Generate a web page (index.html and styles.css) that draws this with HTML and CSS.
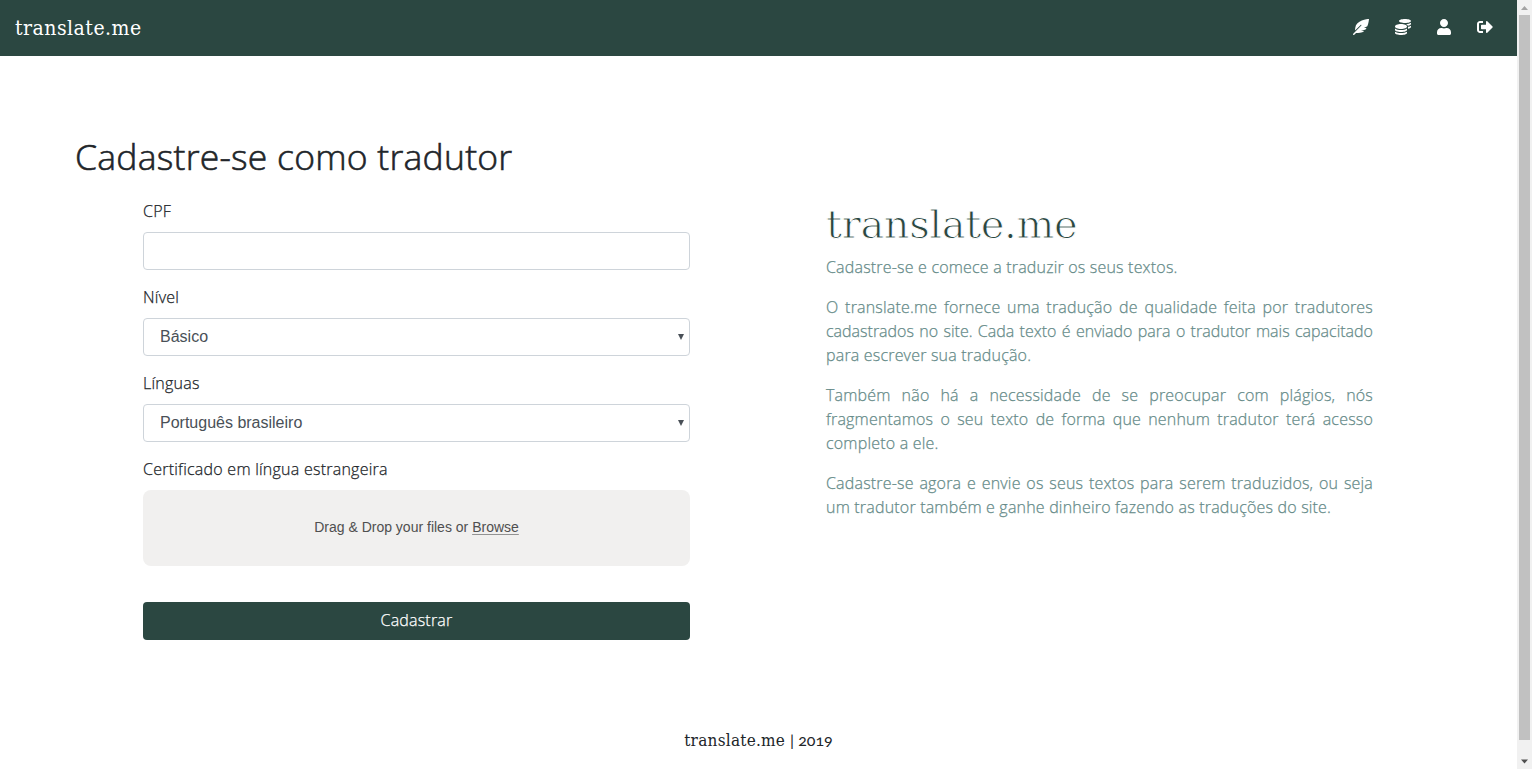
FILE: index.html
```
<!DOCTYPE html>
<html lang="pt-BR">
<head>
<meta charset="utf-8">
<title>translate.me</title>
<link rel="stylesheet" href="styles.css">
</head>
<body>
<div class="page">
  <nav class="navbar">
    <a class="brand">translate.me</a>
    <div class="nav-icons">
      <svg width="16" height="16" viewBox="0 0 512 512"><path d="M512 0C460.22 3.56 96.44 38.2 71.01 287.61c-3.09 26.66-4.84 53.44-5.99 80.24l178.87-178.69c6.25-6.25 16.4-6.25 22.65 0s6.25 16.38 0 22.63L7.04 471.03c-9.38 9.37-9.38 24.57 0 33.94 9.38 9.37 24.59 9.37 33.98 0l57.13-57.07c42.09-.14 84.15-2.53 125.96-7.36 53.48-5.44 97.02-26.47 132.58-56.54H255.74l146.79-48.88c11.25-14.89 21.37-30.71 30.45-47.12h-81.14l106.54-53.21C500.29 132.86 510.19 26.26 512 0z"/></svg>
      <svg width="16" height="16" viewBox="0 0 512 512"><path d="M0 405.3V448c0 35.3 86 64 192 64s192-28.700 192-64v-42.700C342.700 434.400 267.200 448 192 448S41.300 434.400 0 405.300zM320 128c106 0 192-28.700 192-64S426 0 320 0 128 28.700 128 64s86 64 192 64zM0 300.400V352c0 35.300 86 64 192 64s192-28.700 192-64v-51.600c-41.300 34-116.900 51.600-192 51.600S41.300 334.400 0 300.400zm416 11c57.300-11.100 96-31.700 96-55.400v-42.700c-23.200 16.400-57.300 27.600-96 34.500v63.600zM192 160C86 160 0 195.800 0 240s86 80 192 80 192-35.800 192-80-86-80-192-80zm219.300 56.300c60-10.800 100.700-32 100.700-56.300v-42.700c-35.500 25.100-96.500 38.600-160.700 41.800 29.500 14.300 51.200 33.500 60 57.200z"/></svg>
      <svg width="14" height="16" viewBox="0 0 448 512"><path d="M224 256c70.700 0 128-57.300 128-128S294.700 0 224 0 96 57.300 96 128s57.300 128 128 128zm89.600 32h-16.700c-22.200 10.200-46.900 16-72.900 16s-50.600-5.800-72.900-16h-16.700C60.200 288 0 348.200 0 422.400V464c0 26.500 21.500 48 48 48h352c26.500 0 48-21.500 48-48v-41.600c0-74.200-60.200-134.400-134.400-134.400z"/></svg>
      <svg width="16" height="16" viewBox="0 0 512 512"><path d="M497 273L329 441c-15 15-41 4.500-41-17v-96H152c-13.300 0-24-10.700-24-24v-96c0-13.300 10.700-24 24-24h136V88c0-21.400 25.900-32 41-17l168 168c9.300 9.400 9.300 24.600 0 34zM192 436v-40c0-6.600-5.400-12-12-12H96c-17.700 0-32-14.300-32-32V160c0-17.700 14.300-32 32-32h84c6.600 0 12-5.400 12-12V76c0-6.600-5.400-12-12-12H96c-53 0-96 43-96 96v192c0 53 43 96 96 96h84c6.600 0 12-5.400 12-12z"/></svg>
    </div>
  </nav>
  <main class="container">
    <h1 class="heading">Cadastre-se como tradutor</h1>
    <div class="row">
      <form class="form">
        <label class="label">CPF</label>
        <div class="control"></div>
        <label class="label">Nível</label>
        <div class="control">Básico<svg class="arrow" width="6" height="6"><path d="M0 0h6L3 6z"/></svg></div>
        <label class="label">Línguas</label>
        <div class="control">Português brasileiro<svg class="arrow" width="6" height="6"><path d="M0 0h6L3 6z"/></svg></div>
        <label class="label">Certificado em língua estrangeira</label>
        <div class="drop"><span>Drag &amp; Drop your files or <span class="browse">Browse</span></span></div>
        <button class="submit" type="button">Cadastrar</button>
      </form>
      <section class="about">
        <h2 class="title">translate.me</h2>
        <p>Cadastre-se e comece a traduzir os seus textos.</p>
        <p><span class="line">O translate.me fornece uma tradução de qualidade feita por tradutores</span> <span class="line tight">cadastrados no site. Cada texto é enviado para o tradutor mais capacitado</span> para escrever sua tradução.</p>
        <p><span class="line">Também não há a necessidade de se preocupar com plágios, nós</span> <span class="line">fragmentamos o seu texto de forma que nenhum tradutor terá acesso</span> completo a ele.</p>
        <p><span class="line">Cadastre-se agora e envie os seus textos para serem traduzidos, ou seja</span> um tradutor também e ganhe dinheiro fazendo as traduções do site.</p>
      </section>
    </div>
  </main>
  <footer class="footer"><span class="footer-brand">translate.me</span><span class="year">| 2019</span></footer>
</div>
<div class="scrollbar">
  <svg width="15" height="15"><path d="M4 10l3.500-4L11 10z" fill="#a3a3a3"/></svg>
  <div class="thumb"></div>
  <svg class="down" width="15" height="15"><path d="M4 5.500h7L7.500 9.500z" fill="#505050"/></svg>
</div>
</body>
</html>
```
FILE: styles.css
```
* { box-sizing: border-box; }
body {
  margin: 0;
  height: 769px;
  display: flex;
  overflow: hidden;
  background: #fff;
  color: #212529;
  font: 300 16px/24px "Open Sans", sans-serif;
  letter-spacing: .19px;
}
.page { flex: 1; }
.navbar {
  height: 56px;
  padding: 0 24px 0 15px;
  display: flex;
  align-items: center;
  justify-content: space-between;
  background: #2b4741;
  color: #fff;
}
.brand {
  font: 21px/30px "DejaVu Serif Condensed", "DejaVu Serif", serif;
  font-stretch: condensed;
  letter-spacing: .47px;
}
.nav-icons { display: flex; gap: 26px; padding-bottom: 2px; fill: #fff; }
.container { width: 1366px; margin: 0 0 0 75px; padding-top: 78px; }
.heading {
  margin: 0 0 22px;
  font-size: 35.500px;
  line-height: 44px;
  font-weight: 300;
  letter-spacing: .24px;
  -webkit-text-stroke: .6px;
}
.row { display: grid; grid-template-columns: 1fr 1fr; }
.form { padding: 0 68px; }
.about { padding: 0 68px; color: #668b89; }
.label { display: block; margin: -1px 0 9px; letter-spacing: .24px; -webkit-text-stroke: .25px; }
.control {
  height: 38px;
  margin-bottom: 16px;
  padding: 0 5px 0 16px;
  display: flex;
  align-items: center;
  justify-content: space-between;
  border: 1px solid #ced4da;
  border-radius: 4px;
  color: #495057;
  font: 16px/24px "Liberation Sans", Arial, sans-serif;
  letter-spacing: 0;
}
.arrow { fill: #495057; }
.drop {
  height: 76px;
  margin-bottom: 36px;
  display: flex;
  align-items: center;
  justify-content: center;
  padding-bottom: 2px;
  border-radius: 8px;
  background: #f1f0ef;
  color: #4f4f4f;
  font: 14px/20px "Liberation Sans", Arial, sans-serif;
  letter-spacing: 0;
}
.browse { text-decoration: underline 1px #929292; text-underline-offset: 2px; }
.submit {
  display: block;
  width: 100%;
  height: 38px;
  padding: 0 0 2px;
  border: 0;
  border-radius: 4px;
  background: #2b4741;
  color: #fff;
  font: inherit;
  letter-spacing: .19px;
  -webkit-text-stroke: .25px;
}
.title {
  margin: 0 0 7px;
  color: #2b4741;
  font: 40px/48px "DejaVu Serif", serif;
  letter-spacing: -.4px;
  -webkit-text-stroke: 1px #fff;
}
.about p { margin: 0 0 16px; white-space: nowrap; -webkit-text-stroke: .25px; }
.line { display: block; text-align: justify; text-align-last: justify; white-space: normal; }
.tight { letter-spacing: 0; }
.footer { margin-top: 88px; display: flex; justify-content: center; gap: 5px; }
.footer-brand {
  font-family: "DejaVu Serif Condensed", "DejaVu Serif", serif;
  font-weight: 400;
  font-stretch: condensed;
  font-size: 17px;
  letter-spacing: .25px;
}
.year { font-family: Lato, sans-serif; font-weight: 400; font-variant-numeric: oldstyle-nums; letter-spacing: 0; }
.scrollbar { width: 15px; background: #f1f1f1; display: flex; flex-direction: column; align-items: center; }
.thumb { width: 11px; height: 725px; background: #c1c1c1; }
.down { margin-top: auto; }
```
